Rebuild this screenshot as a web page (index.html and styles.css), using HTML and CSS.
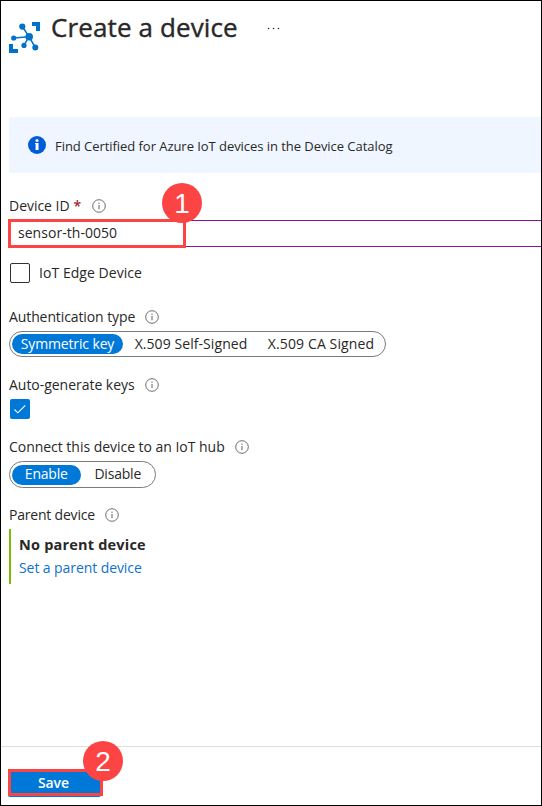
FILE: index.html
```html
<!DOCTYPE html>
<html lang="en">
<head>
<meta charset="utf-8">
<title>Create a device</title>
<link rel="stylesheet" href="styles.css">
</head>
<body>
<svg class="defs" aria-hidden="true">
  <symbol id="info" viewBox="0 0 14 14"><circle cx="7" cy="7" r="6.300" fill="none" stroke="#605e5c" stroke-width=".9"/><path d="M7 6v4.200" stroke="#605e5c" stroke-width="1"/><circle cx="7" cy="4.200" r=".65" fill="#605e5c"/></symbol>
</svg>
<main class="blade">
  <header class="header">
    <svg class="logo" viewBox="0 0 31 31" fill="#0072c9">
      <path d="M23 0h8v9h-4V4h-4zM0 22h4v5h5v4H0z"/>
      <path d="M13.300 4.500L20 14.700M4.700 16L20 14.700M20 14.700L15 23.300M20 14.700L26.300 25.500" stroke="#0072c9" stroke-width="1.500"/>
      <circle cx="13.300" cy="4.600" r="3.100"/><circle cx="4.700" cy="16" r="2.600"/><circle cx="20.200" cy="14.700" r="3.800"/><circle cx="15" cy="23.400" r="2.600"/><circle cx="26.300" cy="25.500" r="3"/>
    </svg>
    <h1 class="title">Create a device</h1>
    <svg class="more" viewBox="0 0 13 3" fill="#323130"><circle cx="1.500" cy="1.500" r=".8"/><circle cx="6.500" cy="1.500" r=".8"/><circle cx="11.500" cy="1.500" r=".8"/></svg>
  </header>

  <div class="banner">
    <svg class="banner-icon" viewBox="0 0 18 18"><circle cx="9" cy="9" r="9" fill="#015cda"/><circle cx="9" cy="4.400" r="1.500" fill="#fff"/><path d="M7 7h3.500v7H7.600V8H7z" fill="#fff"/></svg>
    <span class="banner-text">Find Certified for Azure IoT devices in the Device Catalog</span>
  </div>

  <section class="form">
    <div class="label device-label"><span class="t-id">Device ID</span><span class="star">*</span><svg class="info"><use href="#info"/></svg></div>
    <div class="input"><span class="t-value">sensor-th-0050</span>
      <div class="highlight highlight-id"></div><div class="step step-one">1</div>
    </div>
    <div class="check-row"><span class="box"></span><span class="t-edge">IoT Edge Device</span></div>

    <div class="label auth-label"><span class="t-auth">Authentication type</span><svg class="info"><use href="#info"/></svg></div>
    <div class="pills auth-pills">
      <span class="pill on w-sym"><span class="t-sym">Symmetric key</span></span><span class="pill w-self"><span class="t-self">X.509 Self-Signed</span></span><span class="pill w-ca"><span class="t-ca">X.509 CA Signed</span></span>
    </div>

    <div class="label keys-label"><span class="t-keys">Auto-generate keys</span><svg class="info"><use href="#info"/></svg></div>
    <span class="box checked"><svg viewBox="0 0 20 20"><path d="M4.500 10.500l3.300 3.300 7.500-7.500" fill="none" stroke="#fff" stroke-width="1.100"/></svg></span>

    <div class="label hub-label"><span class="t-hub">Connect this device to an IoT hub</span><svg class="info"><use href="#info"/></svg></div>
    <div class="pills hub-pills">
      <span class="pill on w-enable"><span class="t-enable">Enable</span></span><span class="pill w-disable"><span class="t-disable">Disable</span></span>
    </div>

    <div class="label parent-label"><span class="t-parent">Parent device</span><svg class="info"><use href="#info"/></svg></div>
    <div class="parent">
      <strong class="t-none">No parent device</strong>
      <a class="t-set">Set a parent device</a>
    </div>
  </section>

  <footer class="footer">
    <div class="save"><span class="t-save">Save</span>
      <div class="highlight highlight-save"></div><div class="step step-two">2</div>
    </div>
  </footer>
</main>
</body>
</html>
```
FILE: styles.css
```css
* { box-sizing: border-box; }
body { margin: 0; background: #fff; }
.defs { position: absolute; width: 0; height: 0; }
.blade {
  width: 542px; height: 806px; border: 1px solid #000; overflow: hidden;
  display: flex; flex-direction: column; background: #fff;
  font: 14px/20px "Open Sans", "Noto Sans", sans-serif; color: #292827; white-space: nowrap;
}
.header { display: flex; align-items: flex-start; height: 116px; padding-left: 8px; }
.logo { width: 31px; height: 31px; margin-top: 21px; }
.title { width: 186px; margin: 8px 0 0 11px; font-size: 26px; line-height: 36px; font-weight: 500; letter-spacing: .12px; -webkit-text-stroke: .4px #292827; }
.more { width: 13px; height: 3px; margin: 26px 0 0 30px; }

.banner { display: flex; align-items: center; height: 56px; margin-left: 8px; padding-left: 19px; background: #eff6ff; border-radius: 2px 0 0 2px; }
.banner-icon { width: 18px; height: 18px; margin-right: 9px; }
.banner-text { font-size: 13px; padding-top: 2px; letter-spacing: -.05px; }

.form { flex: 1; padding-left: 8px; }
.label { display: flex; align-items: center; height: 20px; letter-spacing: -.03px; }
.info { width: 14px; height: 14px; margin-left: 10px; }
.device-label { margin-top: 23px; }
.star { color: #a4262c; font-weight: 600; margin-left: 4px; }
.device-label .info { margin-left: 11px; }
.input { position: relative; height: 27px; margin-top: 4px; padding: 2px 0 0 9px; border: solid #881798; border-width: 1px 0; letter-spacing: .04px; }
.highlight { position: absolute; border: 3px solid #fc4444; }
.highlight-id { left: -1px; top: -2px; width: 178px; height: 29px; }
.step { position: absolute; width: 40px; height: 40px; border-radius: 50%; background: #fc4444; color: #fff; font: 28px/41px "Liberation Sans", sans-serif; text-align: center; letter-spacing: 0; }
.step-one { left: 153px; top: -38px; }
.check-row { display: flex; align-items: center; height: 20px; margin-top: 16px; letter-spacing: .05px; }
.box { display: block; width: 20px; height: 20px; margin: 0 9px 0 1px; border: 1px solid #323130; border-radius: 2px; }
.auth-label { margin-top: 24px; letter-spacing: -.1px; }
.pills { display: flex; align-items: center; height: 26px; padding-left: 2px; border: 1px solid #7d7b79; border-radius: 14px; }
.auth-pills { width: 377px; margin-top: 4px; }
.pill { display: flex; align-items: center; justify-content: center; height: 20px; border-radius: 10px; }
.on { background: #0078d7; color: #fff; }
.w-sym { width: 111px; } .w-self { width: 136px; } .w-ca { width: 124px; }
.t-sym { letter-spacing: -.14px; }
.t-self { letter-spacing: .07px; }
.t-ca { letter-spacing: .12px; }
.keys-label { margin-top: 18px; }
.checked { margin-top: 4px; border: 0; background: #0078d7; }
.checked svg { display: block; width: 20px; height: 20px; }
.hub-label { margin-top: 18px; }
.hub-pills { width: 147px; height: 27px; margin-top: 4px; }
.hub-pills .pill span { margin-top: -2px; letter-spacing: -.2px; }
.w-enable { width: 69px; } .w-disable { width: 75px; }
.parent-label { margin-top: 17px; letter-spacing: -.2px; }
.parent { display: flex; flex-direction: column; height: 55px; margin-top: 4px; padding: 6px 0 0 8px; border-left: 2px solid #7fba00; letter-spacing: -.08px; }
.t-none { font-weight: 700; font-size: 14.5px; letter-spacing: .2px; }
.t-set { margin-top: 3px; color: #0f72cc; }

.footer { height: 59px; padding: 23px 0 0 7px; border-top: 1px solid #dededd; }
.save { position: relative; width: 93px; height: 27px; padding: 3px 0 0 30px; background: #0078d7; border-radius: 2px; color: #fff; font-weight: 600; letter-spacing: -.1px; }
.highlight-save { left: 0; top: -1px; width: 95px; height: 27px; }
.step-two { left: 75px; top: -29px; }
```
